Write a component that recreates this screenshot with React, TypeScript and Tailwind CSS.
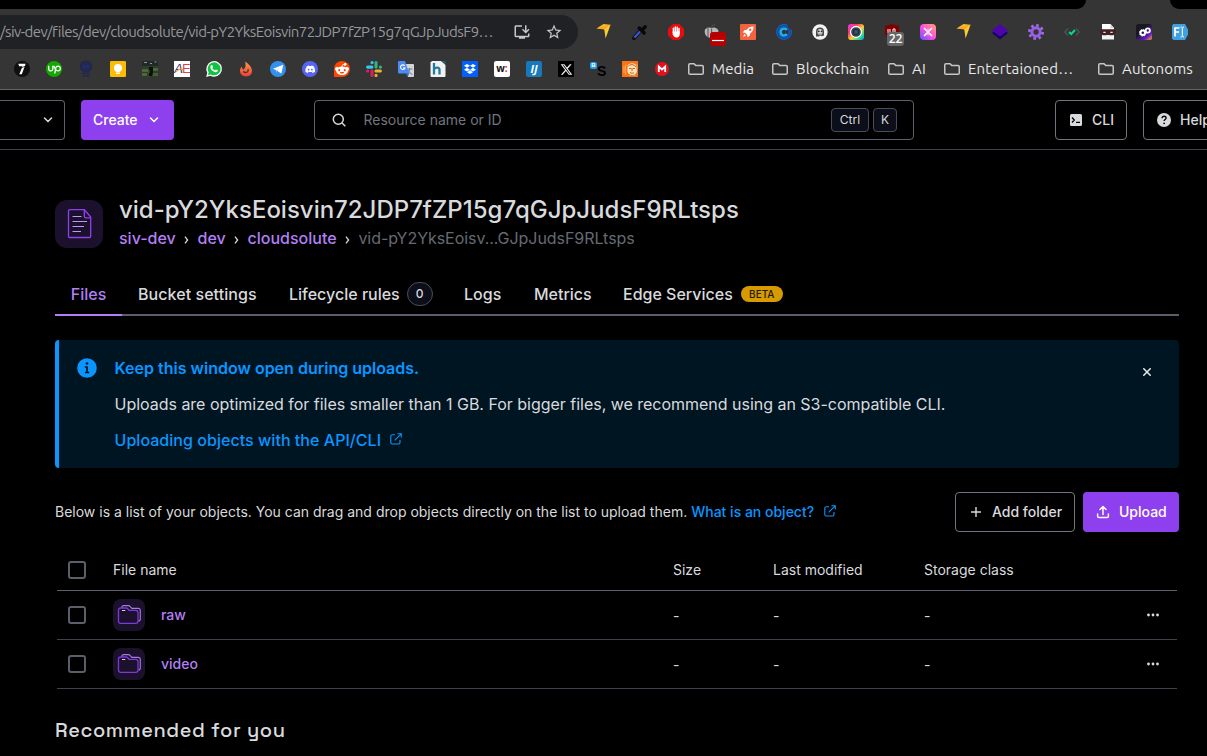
import React from "react";
import {
  FaUpwork, FaDiscord, FaRedditAlien, FaDropbox, FaXTwitter,
} from "react-icons/fa6";
import { MdInstallDesktop, MdStarBorder } from "react-icons/md";

type SvgProps = { children: React.ReactNode; size?: string; box?: string };

const Ico = ({ children, size = "size-4", box = "0 0 16 16" }: SvgProps) => (
  <svg viewBox={box} className={`${size} shrink-0 overflow-visible`} fill="none">{children}</svg>
);

const Bolt = () => (
  <Ico>
    <path d="M0.5 4.5 7.5 0l7 .8-2.7 3.7z" fill="#fcb52c" />
    <path d="M6 4.2 14.5.8 9.6 14.5 8.3 5.4z" fill="#fecb2f" />
    <path d="M.5 4.5 7.4 2.4 14.5.8 8.4 5.6z" fill="#f9a825" />
  </Ico>
);

const extensions: React.ReactNode[] = [
  <Bolt />,
  <Ico>
    <path d="M2 14.2 9 6" stroke="#101010" strokeWidth="4" strokeLinecap="round" />
    <path d="M3 13 8 7.4" stroke="#3f51d8" strokeWidth="2.2" strokeLinecap="round" />
    <path d="m7.2 4 5 5M10.500 5.500l2.800-2.800" stroke="#080808" strokeWidth="3.4" strokeLinecap="round" />
  </Ico>,
  <Ico>
    <path d="M4.7 0h6.6L16 4.7v6.6L11.3 16H4.7L0 11.3V4.7z" fill="#e40d0d" />
    <path d="M5.4 8.8V4.2M7.3 8V2.9M9.2 8V3.3M11 9V4.6" stroke="#fff" strokeWidth="1.5" strokeLinecap="round" />
    <path d="M4.7 7.5h7v2.7c0 2-1.2 3.3-3 3.3-2 0-3.2-1.2-4-3z" fill="#fff" />
  </Ico>,
  <Ico>
    <path d="M1 5.500C3 3 5.500 3 7.600 4c2-1 5-.8 6.800 2.500v4L8 14C3.500 14.500-.500 10.500 1 5.500z" fill="#b7b7b7" />
    <path d="M7.600 4.500V14M7.600 4C7.500 2 9 1 11 .8M4 3.500V13" stroke="#555" />
    <rect x="6" y="8" width="16" height="14" rx="3" fill="#b90000" />
    <path d="M8 16.500h12" stroke="#fff" strokeWidth="1.200" />
  </Ico>,
  <Ico>
    <rect width="16" height="16" rx="1" fill="#f4623e" />
    <path d="M13.500 2.500c-3-.2-5.200 1-6.800 3.300L4.500 6.200 2.700 8.500l2.400.2 2.200 2.200.2 2.500 2.300-1.900.4-2.100c2.500-1.700 3.500-4 3.300-6.900zM4.500 10 3 13l3-1.500z" fill="#fff" />
    <circle cx="10.200" cy="5.800" r="1.200" fill="#f4623e" />
  </Ico>,
  <Ico>
    <circle cx="8" cy="8" r="7.300" stroke="#0765e5" strokeWidth="1.200" strokeDasharray="38 5" />
    <circle cx="8" cy="8" r="5.300" stroke="#0765e5" strokeWidth="1.200" />
    <path d="M10.800 6A3.400 3.400 0 1 0 10.800 10" stroke="#14b4f5" strokeWidth="2.400" />
  </Ico>,
  <Ico>
    <circle cx="8" cy="8" r="7.700" fill="#f3f3f3" />
    <path d="M4 12.500V7.500a4 4 0 0 1 8 0v4l-2 .8-1.500-.8-2 1z" fill="#4a4a4a" />
    <path d="M5.500 9.500v-2a2.500 2.500 0 0 1 5 0v2z" fill="#ddd" />
    <circle cx="6.800" cy="7.300" r=".9" fill="#222" /><circle cx="9.600" cy="7.300" r=".9" fill="#222" />
    <path d="M6 10h4" stroke="#ddd" />
  </Ico>,
  <Ico>
    <defs><linearGradient id="cam" x1="0" y1="0" x2="1" y2="1"><stop stopColor="#e63cff" /><stop offset=".3" stopColor="#ff3265" /><stop offset=".55" stopColor="#ffce2e" /><stop offset=".8" stopColor="#22dc8c" /><stop offset="1" stopColor="#1b8cff" /></linearGradient></defs>
    <rect width="16" height="16" rx="3" fill="url(#cam)" />
    <circle cx="8" cy="8" r="5.500" fill="#33485b" stroke="#fff" strokeWidth="1.300" />
    <circle cx="8" cy="8" r="2.800" fill="#3d4c5a" stroke="#1c2733" />
  </Ico>,
  <span className="relative size-4">
    <Ico>
      <path d="M1 1.500C4 1.500 6 .8 8 0c2 .8 4 1.500 7 1.500V8c0 4-3 6.500-7 8-4-1.500-7-4-7-8z" fill="#800000" />
      <path d="M4 5v4h2V5M9 9V5h2v4" stroke="#fff" />
    </Ico>
    <span className="absolute left-[3px] top-2 flex h-3.5 w-[17px] items-center justify-center rounded-[3px] bg-[#666] font-['Open_Sans',sans-serif] text-[12px] font-semibold text-white">22</span>
  </span>,
  <Ico>
    <defs><linearGradient id="spark" x1="1" y1="0" x2="0" y2="1"><stop stopColor="#ffab63" /><stop offset=".5" stopColor="#ff4fe0" /><stop offset="1" stopColor="#5757ff" /></linearGradient></defs>
    <rect width="16" height="16" rx="4" fill="url(#spark)" />
    <path d="m4 4 8 8M12 4l-8 8" stroke="#fff" strokeWidth="1.600" />
    <path d="M8 4.500v2M8 9.500v2" stroke="#fff" strokeWidth=".8" />
  </Ico>,
  <Bolt />,
  <Ico>
    <path d="m0 9 8-5 8 5-8 6.500z" fill="#190069" />
    <path d="m0 6.500 8-6.500 8 6.500-8 6z" fill="#4d05ab" />
  </Ico>,
  <Ico>
    <circle cx="8" cy="8" r="6.600" stroke="#a06be8" strokeWidth="2.800" strokeDasharray="2.600 2.580" />
    <circle cx="8" cy="8" r="4.200" stroke="#965fe5" strokeWidth="3" />
  </Ico>,
  <Ico>
    <path d="M4 4.500.8 8 4 11.500M12 4.500 15.200 8 12 11.500" stroke="#485363" strokeWidth="1.400" />
    <path d="m5 8 2.200 2L11 6" stroke="#00dc82" strokeWidth="2" />
  </Ico>,
  <Ico>
    <path d="M2 0h8.500L14 4v4H2z" fill="#fff" /><path d="M10.500 0v4H14" fill="#d4d4d4" />
    <path d="M2 11h12v4.500H2z" fill="#f2f2f2" />
    <path d="M.3 5.300h15.400v4L13 11.200H9.800L8 9.700l-1.800 1.500H3L.3 9.300z" fill="#402020" />
    <path d="M3.300 8.300h2.400M10.300 8.300h2.400" stroke="#ddd" strokeWidth="1.200" />
  </Ico>,
  <Ico>
    <defs><linearGradient id="gears" x1="1" y1="1" x2=".2" y2=".1"><stop stopColor="#ffad22" /><stop offset=".3" stopColor="#6118c7" /><stop offset=".7" stopColor="#181823" /></linearGradient></defs>
    <rect width="16" height="16" rx="2.500" fill="url(#gears)" />
    <circle cx="6.800" cy="8.800" r="2.300" stroke="#fff" strokeWidth="2" />
    <circle cx="11.800" cy="6.500" r="2.100" stroke="#fff" strokeWidth="1.800" />
    <circle cx="6.800" cy="8.800" r="3.300" stroke="#fff" strokeDasharray="1.300 1.290" />
  </Ico>,
  <Ico>
    <path d="M1.500 0H13l3 5.500v5L13 16H1.500L0 14.500v-13z" fill="#41a1df" />
    <path d="M3 12.500V4h4.500M3 8h4" stroke="#fff" strokeWidth="1.700" />
    <path d="M8.500 3c1 0 1.500.2 1.800.8.300-.6.800-.8 1.700-.8M10.300 3.800v8.500M8.500 13c1 0 1.500-.2 1.800-.8.300.6.800.8 1.700.8" stroke="#fff" />
  </Ico>,
];

const bookmarks: React.ReactNode[] = [
  <Ico><circle cx="8" cy="8" r="8" fill="#101010" /><path d="M4.200 2.700h7.500L7.800 13.300H5.300L8.500 5.200H5.200z" fill="#fff" /><path d="M3 8.500 12 5" stroke="#101010" strokeWidth=".7" /></Ico>,
  <span className="flex size-4 items-center justify-center rounded-full bg-[#14a800] text-[13px] text-white"><FaUpwork /></span>,
  <Ico>
    <circle cx="8" cy="5.500" r="5.500" fill="#272b48" stroke="#202553" strokeWidth="1.200" />
    <path d="M5 1.500v8M8 0v10M11 1.500v8M3 5.500h10" stroke="#202553" strokeWidth=".8" />
    <circle cx="6" cy="5.500" r="1.600" fill="#22306f" /><circle cx="10" cy="5.500" r="1.600" fill="#22306f" />
    <path d="M3.500 12.500h9M4.500 15h7M6 10.500v5M10 10.500v5" stroke="#222750" />
  </Ico>,
  <Ico><rect width="16" height="16" rx="1.300" fill="#fbbc04" /><circle cx="8" cy="7" r="4" fill="#fff" /><path d="M6 8h4v2.500H6zM6 11.500h4v1.500H6z" fill="#fff" /></Ico>,
  <Ico>
    <path d="M0 0h16v16H0z" fill="#2b4024" /><path d="M0 0h16v5H0z" fill="#202a2a" />
    <path d="M2 1.500h3M8 2.500h2M12.500 1h2" stroke="#8b9ba0" strokeWidth="1.200" />
    <path d="M0 9.500h6M11 8.500h5M0 13.500h5" stroke="#526e41" strokeWidth="2.500" />
    <path d="M11 12h5v3h-5z" fill="#446036" />
    <path d="M7 6h4v5l-1 4H7z" fill="#0c0f0c" /><path d="M7 9v3" stroke="#78503c" />
  </Ico>,
  <span className="relative flex size-4 items-center justify-center overflow-hidden bg-white font-['Liberation_Sans',sans-serif] text-[13px] tracking-[-1px]">
    <span className="italic text-[#2b3186]">A</span><span className="text-[#d94545]">E</span>
    <svg viewBox="0 0 16 16" className="absolute inset-0 size-4"><path d="M2 11C5 7 8 8 9 9" stroke="#eda63a" strokeWidth="1.200" fill="none" /></svg>
  </span>,
  <Ico>
    <path d="m.2 15.900 1.100-4.200A7.800 7.800 0 1 1 8 15.700a8 8 0 0 1-3.700-.9z" fill="#fff" />
    <path d="m1.900 14.200.8-2.900A6.500 6.500 0 1 1 8 14.300a6.500 6.500 0 0 1-3.300-.9z" fill="#12c343" />
    <path d="M5.300 4.300c.6-.5 1-.2 1.200.3l.5 1.200-.7 1.100c.6 1.200 1.500 1.900 2.700 2.500l.9-1 1.900.9c0 1.400-1 2-2.100 1.900C7 10.800 4.500 8.500 4.300 6c0-.7.400-1.300 1-1.700z" fill="#fff" />
  </Ico>,
  <Ico>
    <defs><linearGradient id="fire" x1="0" y1="0" x2="0" y2="1"><stop stopColor="#fb9b45" /><stop offset="1" stopColor="#ed3e35" /></linearGradient></defs>
    <path d="M7 .5c4 2.500 7 6 7 9.300C14 13.700 11.500 15.500 8 15.500S2 13 2 9.800c0-1.700.7-3.200 1.900-4.300C4 7 4.300 8 5.300 8.700 8 6.500 8 3.500 7 .5z" fill="url(#fire)" />
    <path d="M10 8c.7 2-.5 3.500-2.300 3.500-1 0-1.800-.4-2.400-1" stroke="#353535" strokeWidth="1.200" />
  </Ico>,
  <Ico><circle cx="8" cy="8" r="8" fill="#3390ec" /><path d="m3 7.800 9.500-3.900c.5-.2.700.1.600.6l-1.600 7.400c-.1.500-.5.600-.9.300L7 9.500z" fill="#fff" /><path d="M7 9.500 11 6l-5 3.200.5 2.800z" fill="#b7d7f5" /></Ico>,
  <span className="flex size-4 items-center justify-center rounded-full bg-[#5865f2] text-[10.500px] text-white"><FaDiscord /></span>,
  <span className="flex size-4 items-center justify-center rounded-full rounded-bl-none bg-[#ff4500] text-[14px] text-white"><FaRedditAlien /></span>,
  <Ico>
    <g strokeWidth="3.100" strokeLinecap="round">
      <path d="M1.600 6.100H5.900M6 1.600h.1" stroke="#36c5f0" /><path d="M10 1.600V6M14.400 6.100h.1" stroke="#2eb67d" />
      <path d="M10 10h4.400M10 14.400h.1" stroke="#ecb22e" /><path d="M6 10v4.400M1.600 10h.1" stroke="#e01e5a" />
    </g>
  </Ico>,
  <Ico>
    <path d="M6 3h9a1 1 0 0 1 1 1v11a1 1 0 0 1-1 1H10z" fill="#d5d5d5" />
    <path d="M8.500 8h6M11.500 7v1c0 3-1.500 5-3 5.500M10 9c.8 2 2.500 3.500 4.500 4.500" stroke="#6b7f8e" />
    <path d="M1 0h6l4.300 12.500H1a1 1 0 0 1-1-1V1a1 1 0 0 1 1-1z" fill="#4c8bf5" />
    <path d="M6.700 4.800A2.300 2.300 0 1 0 7 7H5" stroke="#fff" strokeWidth="1.100" />
    <path d="m7.500 12.500 3.800 0L9.500 16z" fill="#2b62c8" />
  </Ico>,
  <Ico>
    <path d="M2 0h9l4.500 4v11a1 1 0 0 1-1 1H1.500a1 1 0 0 1-1-1V1.500z" fill="#f2f2f2" />
    <path d="M11 0h3a1.500 1.500 0 0 1 1.500 1.500V5C15 2.500 13.500 1 11 0z" fill="#176f90" />
    <path d="M4 2v11.500M4 8.500C5.200 6 9.500 6 9.500 9v4.500" stroke="#227c9d" strokeWidth="2.300" />
  </Ico>,
  <span className="flex size-4 items-center justify-center bg-[#0061ff] text-[12px] text-white"><FaDropbox /></span>,
  <span className="flex size-4 items-center justify-center rounded-[2px] bg-white pb-px font-['Open_Sans',sans-serif] text-[10px] font-bold text-[#111]">w<span className="text-[#e22]">:</span></span>,
  <span className="flex size-4 items-center justify-center rounded-[2px] bg-[#1779ba] font-['Open_Sans',sans-serif] text-[11px] font-bold italic text-white">IJ</span>,
  <span className="flex size-4 items-center justify-center bg-black text-[13px] text-[#eee]"><FaXTwitter /></span>,
  <span className="relative size-4">
    <span className="absolute left-[7px] top-[3px] font-['Liberation_Sans',sans-serif] text-[14px] font-bold leading-[14px] text-black">S</span>
    <span className="absolute left-0 top-px flex size-[7px] items-center justify-center rounded-[2px] bg-[#1da1f2] font-['Liberation_Sans',sans-serif] text-[6px] font-bold text-white">B</span>
  </span>,
  <Ico>
    <path d="M0 0h16v16H0z" fill="#f97316" />
    <path d="M5.500 5C6 2 13 1 14 4.500l1 6-2 4.500H8L5.500 11z" fill="#ffe1b8" />
    <path d="M6 5.500C8 3 12 3 14 6M7 7.500h2M11 7.500h2M8 11.500c1.500 1 3 1 4 0M10 7v3" stroke="#c0632c" />
    <path d="M4 3.500C2.500 7 4.500 9 3.500 13.500M2 5v7M15 3v5" stroke="#ffb36b" strokeWidth=".8" />
    <path d="M14 13c-2 2-5 2-7 .5" stroke="#df721f" />
  </Ico>,
  <Ico><circle cx="8" cy="8" r="7" fill="#e6101c" /><path d="M4.800 11V5.500L8 8.500l3.200-3V11" stroke="#fff" strokeWidth="1.800" /></Ico>,
];

const FolderLine = () => (
  <svg viewBox="0 0 16 12" className="h-3 w-4 shrink-0" fill="none">
    <path d="M.75 10V2C.75 1.200 1.200.75 2 .75h4L7.700 2.400H14c.8 0 1.250.5 1.250 1.200V10c0 .8-.5 1.250-1.250 1.250H2C1.200 11.250.75 10.800.75 10z" stroke="#c4c7c5" strokeWidth="1.500" />
  </svg>
);

const Chevron = () => (
  <svg viewBox="0 0 10 6" className="h-1.5 w-2.5 shrink-0" fill="none"><path d="m1.500 1 3.500 3.500L8.500 1" stroke="currentColor" strokeWidth="1.500" strokeLinecap="round" strokeLinejoin="round" /></svg>
);

const External = () => (
  <svg viewBox="0 0 12 12" className="size-3 shrink-0" fill="none" stroke="currentColor" strokeWidth="1.100">
    <path d="M5 1.800H2.300C1.400 1.800.8 2.400.8 3.300v6.200c0 .9.600 1.500 1.500 1.500h6.200c.9 0 1.500-.6 1.500-1.500V7M7.500.7h3.800v3.800M11.200.8 4.700 7.300" />
  </svg>
);

const Checkbox = () => <span className="block size-[18px] shrink-0 rounded-[3px] border-2 border-[#5b5e6b]" />;

const FolderTile = () => (
  <span className="flex size-8 shrink-0 rounded-lg bg-[#1b112c]">
    <svg viewBox="0 0 32 32" className="size-8" fill="none">
      <path d="M8.800 9V8.500C8.800 7.300 9.500 6.600 10.700 6.600h4.600c.8 0 1.300.3 1.700.8l1.800 2h6.300c1.300 0 2.200.8 2.200 2v8.600c0 1.200-.8 2-1.900 2" stroke="#a67be0" strokeWidth="1.100" />
      <path d="M5.500 22V11c0-1.300.9-2 2.200-2h5.300c1 0 1.500.4 2 1l1 1.300h6.700c1.500 0 2.300.8 2.300 2.200V22c0 1.400-.9 2.300-2.300 2.300H7.800c-1.400 0-2.300-.9-2.300-2.300z" fill="#1b112c" stroke="#7c3bd6" strokeWidth="1.300" />
      <path d="M9 11.500h3.300" stroke="#d9c0ff" strokeWidth="1" />
    </svg>
  </span>
);

const Browser = () => (
  <div className="h-[90px] border-b border-[#636363] bg-[#353535] font-['Ubuntu','Open_Sans',sans-serif]">
    <div className="flex h-[9px] bg-[#353535]">
      <div className="w-[1086px] rounded-br-[9px] bg-black" />
      <div className="w-[84px]" />
      <div className="flex-1 rounded-bl-[9px] bg-black" />
    </div>
    <div className="flex h-[46px] items-center">
      <div className="flex h-[34px] w-[578px] items-center rounded-r-full bg-[#202124]">
        <div className="w-[513px] shrink-0 whitespace-nowrap text-[15px] tracking-[-0.53px] text-[#95989b]">/siv-dev/files/dev/cloudsolute/vid-pY2YksEoisvin72JDP7fZP15g7qGJpJudsF9…</div>
        <MdInstallDesktop className="size-[18px] text-[#c7c7c7]" />
        <MdStarBorder className="ml-3.5 size-[18px] text-[#c7c7c7]" />
      </div>
      <div className="ml-[18px] flex gap-5">{extensions.map((e, i) => <span key={i} className="flex size-4">{e}</span>)}</div>
    </div>
    <div className="flex h-7 items-center">
      <div className="ml-3.5 flex w-[674px] shrink-0 gap-4">{bookmarks.map((b, i) => <span key={i} className="flex size-4">{b}</span>)}</div>
      {[
        ["Media", "w-[84px]"],
        ["Blockchain", "w-[116px]"],
        ["AI", "w-14"],
        ["Entertaioned…", "w-[154px]"],
        ["Autonoms", "w-[110px]"],
      ].map(([name, w]) => (
        <div key={name} className={`flex shrink-0 items-center gap-2 whitespace-nowrap text-[15px] tracking-[0.15px] text-[#e8e8e8] ${w}`}><FolderLine />{name}</div>
      ))}
    </div>
  </div>
);

const Header = () => (
  <header className="flex h-[60px] items-center overflow-hidden border-b border-[#3f414d] text-[14px] text-[#d9dadd]">
    <div className="flex h-10 w-[65px] shrink-0 items-center justify-end rounded-r border border-l-0 border-[#5b5e6b] pr-[11px]"><Chevron /></div>
    <button className="ml-4 flex h-10 w-[93px] shrink-0 items-center justify-between rounded bg-[#8f40ee] pl-3 pr-[15px] font-medium text-white"><span>Create</span><Chevron /></button>
    <div className="ml-[140px] flex h-10 w-[600px] shrink-0 items-center rounded border border-[#5b5e6b] pl-[17px] pr-4">
      <svg viewBox="0 0 14 14" className="size-3.5" fill="none" stroke="#d9dadd" strokeWidth="1.500"><circle cx="6.300" cy="6.300" r="5" /><path d="m10 10 3.300 3.300" /></svg>
      <span className="ml-[17.500px] flex-1 text-[#71747f]">Resource name or ID</span>
      <kbd className="flex h-6 w-[38px] items-center justify-center rounded border border-[#4a4c5a] bg-[#0c0e1a] font-['Inter',sans-serif] text-[12px]">Ctrl</kbd>
      <kbd className="ml-1 flex h-6 w-6 items-center justify-center rounded border border-[#4a4c5a] bg-[#0c0e1a] font-['Inter',sans-serif] text-[12px]">K</kbd>
    </div>
    <button className="ml-[141px] flex h-10 w-[72px] shrink-0 items-center rounded border border-[#71747f] pl-3.5 font-medium">
      <svg viewBox="0 0 12 12" className="mr-2.5 size-3 shrink-0" fill="none"><rect width="12" height="12" rx="1.500" fill="#d9dadd" /><path d="M2 3.500 4.300 6 2 8.500M6 8.300h4" stroke="#000" strokeWidth="1.300" /></svg>CLI
    </button>
    <button className="ml-4 flex h-10 w-24 shrink-0 items-center rounded border border-[#71747f] pl-[13px] font-medium">
      <svg viewBox="0 0 14 14" className="mr-[9px] size-3.5 shrink-0" fill="none"><circle cx="7" cy="7" r="7" fill="#d9dadd" /><path d="M5 5.300C5 4 6 3.300 7.100 3.300c1.200 0 2 .8 2 1.800C9.100 6.500 7.200 6.500 7.100 8" stroke="#000" strokeWidth="1.400" /><circle cx="7.100" cy="10.300" r=".9" fill="#000" /></svg>Help
    </button>
  </header>
);

const Sep = () => <svg viewBox="0 0 5 8" className="mx-[8.400px] mt-1 h-2 w-[5px]" fill="none"><path d="m1 .7 2.600 3.300L1 7.300" stroke="#d9dadd" strokeWidth="1.300" /></svg>;

const TitleBlock = () => (
  <div className="flex">
    <div className="mt-1.5 size-12 shrink-0 rounded-xl bg-[#1b112c]">
      <svg viewBox="0 0 48 48" className="size-12" fill="none">
        <path d="M13.500 11c0-.8.500-1.300 1.300-1.300h14.500L35.700 17v19.200c0 .8-.5 1.300-1.300 1.300H14.800c-.8 0-1.300-.5-1.300-1.300z" stroke="#8f40ee" strokeWidth="1.300" />
        <path d="M29.300 9.700v6.500c0 1 .6 1.600 1.600 1.600h4.800" stroke="#8f40ee" strokeWidth="1.300" />
        <path d="M17.500 16.500h9M17.500 21.500h14.500M17.500 26.500h11.500M17.500 31.500h8.500" stroke="#bf95f9" strokeWidth="1.200" />
      </svg>
    </div>
    <div className="ml-4 min-w-0">
      <h1 className="whitespace-nowrap text-[24px] font-medium leading-8 text-[#d9dadd]">vid-pY2YksEoisvin72JDP7fZP15g7qGJpJudsF9RLtsps</h1>
      <nav className="flex items-center whitespace-nowrap text-[16px] font-medium leading-6 text-[#b27ff5]">
        <span>siv-dev</span><Sep /><span>dev</span><Sep /><span>cloudsolute</span><Sep /><span className="font-normal tracking-[-0.050px] text-[#666974]">vid-pY2YksEoisv...GJpJudsF9RLtsps</span>
      </nav>
    </div>
  </div>
);

const Tabs = () => (
  <div className="mt-[24px] flex h-[42px] border-b-2 border-[#5b5e6b] text-[16px] font-medium text-[#d9dadd]">
    <div className="flex h-[42px] w-[67px] items-center justify-center border-b-2 border-[#b27ff5] text-[#b27ff5]">Files</div>
    <div className="ml-4 flex w-[151px] items-center tracking-[0.060px]">Bucket settings</div>
    <div className="flex w-[175px] items-center">Lifecycle rules<span className="ml-[7px] flex h-6 w-[26px] items-center justify-center rounded-full border border-[#4a4c5a] bg-[#0c0e1a] text-[12px]">0</span></div>
    <div className="flex w-[70px] items-center">Logs</div>
    <div className="flex w-[89px] items-center">Metrics</div>
    <div className="flex items-center">Edge Services<span className="ml-2 flex h-4 w-[42px] items-center justify-center rounded-full bg-[#d79a00] text-[10px] text-[#241900]">BETA</span></div>
  </div>
);

const Notice = () => (
  <div className="mt-6 flex h-32 rounded border-l-4 border-[#0a95ff] bg-[#001522]">
    <svg viewBox="0 0 20 20" className="ml-[18px] mt-[18px] size-5 shrink-0" fill="none"><circle cx="10" cy="10" r="9.800" fill="#0a95ff" /><circle cx="10" cy="5.500" r="1.300" fill="#001522" /><path d="M7.800 9H10v5M8 14.500h4.200" stroke="#001522" strokeWidth="1.700" /></svg>
    <div className="ml-[17.500px] flex flex-1 flex-col gap-3 pt-4 text-[16px] leading-6 text-[#d9dadd]">
      <strong className="font-semibold text-[#0a95ff]">Keep this window open during uploads.</strong>
      <span className="tracking-[-0.020px]">Uploads are optimized for files smaller than 1 GB. For bigger files, we recommend using an S3-compatible CLI.</span>
      <a className="flex gap-[9px] font-medium tracking-[0.040px] text-[#0a95ff]">Uploading objects with the API/CLI<span className="pt-[5px]"><External /></span></a>
    </div>
    <svg viewBox="0 0 8 8" className="mr-7 mt-7 size-2 shrink-0"><path d="m.3.300 7.400 7.400M7.700.300.300 7.700" stroke="#e9eaeb" strokeWidth="1.500" /></svg>
  </div>
);

const Actions = () => (
  <div className="mt-6 flex h-10 items-center text-[14px] leading-5 text-[#d9dadd]">
    <span className="whitespace-nowrap">Below is a list of your objects. You can drag and drop objects directly on the list to upload them.</span>
    <a className="ml-1 flex items-center gap-2.5 whitespace-nowrap font-medium text-[#0a95ff]">What is an object?<span className="pb-0.5"><External /></span></a>
    <button className="ml-auto flex h-10 w-[120px] items-center rounded border border-[#71747f] pl-[15px] font-medium">
      <svg viewBox="0 0 10 10" className="mr-[11px] size-2.5" stroke="#d9dadd" strokeWidth="1.400"><path d="M5 0v10M0 5h10" /></svg>Add folder
    </button>
    <button className="ml-2 flex h-10 w-24 items-center rounded bg-[#8f40ee] pl-[14px] font-medium text-white">
      <svg viewBox="0 0 12 12" className="mr-2.5 size-3 overflow-visible" fill="none" stroke="#fff" strokeWidth="1.500" strokeLinecap="round" strokeLinejoin="round"><path d="M.6 8v2.200c0 .8.500 1.300 1.300 1.300h8.200c.8 0 1.300-.5 1.300-1.300V8M6 8.500V.6M3 3.500 6 .5l3 3" /></svg>Upload
    </button>
  </div>
);

const cols = "mx-[2px] grid grid-cols-[56px_560px_100px_151px_1fr_36px] items-center border-b";

const Table = () => (
  <div className="mt-[18px] text-[14px] leading-5 text-[#d9dadd]">
    <div className={`${cols} h-[41px] border-[#5b5e6b]`}>
      <span className="pl-[11px]"><Checkbox /></span><span>File name</span><span>Size</span><span>Last modified</span><span>Storage class</span>
    </div>
    {["raw", "video"].map((n) => (
      <div key={n} className={`${cols} h-[49px] border-[#3f414d]`}>
        <span className="pl-[11px]"><Checkbox /></span>
        <span className="flex items-center gap-4 font-medium text-[#b27ff5]"><FolderTile /><span className="pb-px">{n}</span></span>
        <span className="pt-0.5">-</span><span className="pt-0.5">-</span><span className="pt-0.5">-</span>
        <svg viewBox="0 0 12 4" className="ml-1.5 h-1 w-3" fill="#d9dadd"><circle cx="1.500" cy="2" r="1.400" /><circle cx="6" cy="2" r="1.400" /><circle cx="10.500" cy="2" r="1.400" /></svg>
      </div>
    ))}
  </div>
);

export default function App() {
  return (
    <div className="h-[756px] w-[1207px] overflow-hidden bg-black font-['Inter',sans-serif]">
      <Browser />
      <Header />
      <main className="pl-[55px] pr-7 pt-11">
        <TitleBlock />
        <Tabs />
        <Notice />
        <Actions />
        <Table />
        <h2 className="mt-[25px] font-['Space_Grotesk','Inter',sans-serif] text-[20px] font-medium leading-8 tracking-[0.580px] text-[#d9dadd]">Recommended for you</h2>
      </main>
    </div>
  );
}
